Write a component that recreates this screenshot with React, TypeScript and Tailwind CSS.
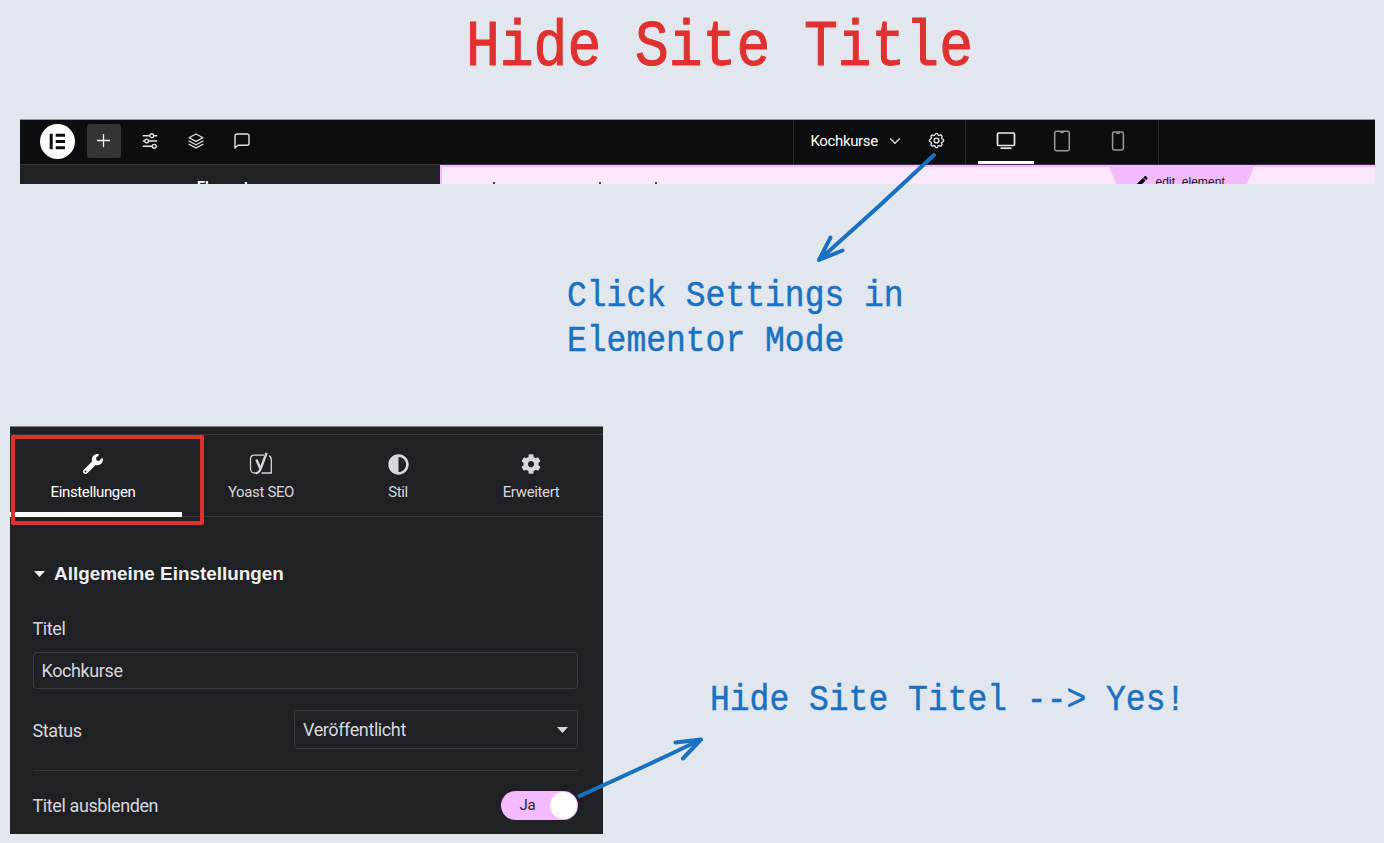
import React from "react";
import { FaAdjust, FaCog, FaWrench, FaPen } from "react-icons/fa";

const roboto = "font-['Roboto',sans-serif]";

function Note({ className, children }: { className: string; children: React.ReactNode }) {
  return (
    <div
      className={`origin-left scale-x-[0.88] whitespace-pre font-['Liberation_Mono',monospace] ${className}`}
    >
      {children}
    </div>
  );
}

function SlidersIcon() {
  return (
    <svg width="16" height="16" viewBox="0 0 16 16" fill="none" stroke="#e4e5e6" strokeWidth="1.4">
      <path d="M.8 2.7h6.900M11.700 2.700H15.200M.8 8h1.800M6.600 8H15.200M.8 13.300h9.400M14.200 13.300h1" />
      <circle cx="9.7" cy="2.7" r="1.9" />
      <circle cx="4.6" cy="8" r="1.9" />
      <circle cx="12.2" cy="13.3" r="1.9" />
    </svg>
  );
}

function LayersIcon() {
  return (
    <svg width="16" height="16" viewBox="0 0 16 16" fill="none" stroke="#e4e5e6" strokeWidth="1.3" strokeLinejoin="round" strokeLinecap="round">
      <path d="M8 1 15 4.700 8 8.400 1 4.700zM1 8l7 3.700L15 8M1 11.200l7 3.700 7-3.700" />
    </svg>
  );
}

function ChatIcon() {
  return (
    <svg width="16" height="16" viewBox="0 0 16 16" fill="none" stroke="#e4e5e6" strokeWidth="1.4" strokeLinejoin="round">
      <path d="M1 15V3a2 2 0 0 1 2-2h10a2 2 0 0 1 2 2v7.300a2 2 0 0 1-2 2H4z" />
    </svg>
  );
}

function GearOutlineIcon() {
  return (
    <svg width="19" height="19" viewBox="0 0 24 24" fill="none" stroke="#e4e5e6" strokeWidth="1.8" strokeLinejoin="round">
      <path d="M10.3 4.3c.4-1.7 3-1.7 3.4 0a1.7 1.7 0 0 0 2.6 1.1c1.5-1 3.3.8 2.4 2.3a1.7 1.7 0 0 0 1 2.6c1.8.4 1.8 3 0 3.4a1.7 1.7 0 0 0-1 2.6c.9 1.5-.9 3.3-2.4 2.4a1.7 1.7 0 0 0-2.6 1c-.4 1.8-3 1.8-3.4 0a1.7 1.7 0 0 0-2.6-1c-1.5.9-3.3-.9-2.4-2.4a1.7 1.7 0 0 0-1-2.6c-1.8-.4-1.8-3 0-3.4a1.7 1.7 0 0 0 1-2.6c-.9-1.5.9-3.3 2.4-2.3 1 .6 2.3 0 2.6-1.1z" />
      <circle cx="12" cy="12" r="3" />
    </svg>
  );
}

function YoastIcon() {
  return (
    <svg width="24" height="24" viewBox="0 0 24 24" fill="none" stroke="#d5d8dc">
      <path strokeWidth="1.3" d="M15 3.200H5.500A4 4 0 0 0 1.500 7v10a4 4 0 0 0 4 4H7M12.500 21h9.800V8c0-2-.8-3.600-2.300-4.300" />
      <path strokeWidth="2.4" d="M7.300 7.500 11.600 17M17.600.8 11.900 16c-1.100 3.500-2.300 5-5 5.200" />
    </svg>
  );
}

function Tab({ width, label, color, children }: { width: string; label: string; color: string; children: React.ReactNode }) {
  return (
    <div className={`flex shrink-0 flex-col items-center pt-[17px] ${width} ${color}`}>
      <div className="flex h-6 items-center justify-center">{children}</div>
      <span className="mt-[6px] text-[15px] leading-5 tracking-[-0.36px]">{label}</span>
    </div>
  );
}

function Toolbar() {
  return (
    <div className="ml-5 h-[65px] w-[1355px] shrink-0 overflow-hidden">
      <div className="flex h-[46px] border-t border-b border-t-[#8d9397] border-b-[#3c303f] bg-[#0c0d0e]">
        <div className="flex w-[773px] items-center pb-0.5 pl-5">
          <svg width="35" height="35" viewBox="0 0 35 35">
            <circle cx="17.5" cy="17.5" r="17.5" fill="#fff" />
            <path fill="#0c0d0e" d="M9.700 9.700h3v15.600h-3zM15.700 9.700H25v3h-9.300zM15.700 16H25v3h-9.300zM15.700 22.300H25v3h-9.300z" />
          </svg>
          <div className="ml-3 flex h-[34px] w-[34px] items-center justify-center rounded-[3px] bg-[#333436]">
            <svg width="14" height="14" viewBox="0 0 14 14" stroke="#f0f0f1" strokeWidth="1.3">
              <path d="M6.500 0v13M0 6.500h13" />
            </svg>
          </div>
          <div className="ml-[21px] flex gap-[30px]">
            <SlidersIcon />
            <LayersIcon />
            <ChatIcon />
          </div>
        </div>
        <div className={`flex w-[172px] items-center border-l border-[#2b2c2e] pb-0.5 pl-[16.5px] text-white ${roboto}`}>
          <span className="w-[67px] whitespace-nowrap pt-px text-[15px] tracking-[-0.36px]">Kochkurse</span>
          <svg className="ml-[11px]" width="12" height="8" viewBox="0 0 12 8" fill="none" stroke="#d8d9da" strokeWidth="1.4">
            <path d="M1.200 1.500 6 6.300l4.800-4.800" />
          </svg>
          <div className="-mt-px ml-[26px]"><GearOutlineIcon /></div>
        </div>
        <div className="flex w-[194px] border-x border-[#2b2c2e] pl-3">
          <div className="flex w-14 items-center justify-center border-b-[3px] border-white">
            <svg width="20" height="20" viewBox="0 0 20 20" fill="none" stroke="#eceded" strokeWidth="1.7">
              <rect x="1.5" y="2" width="17" height="12.5" rx="1.2" />
              <path d="M4.500 17.200h11" />
            </svg>
          </div>
          <div className="flex w-14 items-center justify-center pb-[3px]">
            <svg width="18" height="22" viewBox="0 0 18 22" fill="none" stroke="#9a9b9d" strokeWidth="1.5">
              <rect x="1.7" y="1.2" width="14.6" height="19.6" rx="1.7" />
              <path d="M7.200 2.400h3.600" />
            </svg>
          </div>
          <div className="flex w-14 items-center justify-center pb-[3px]">
            <svg width="14" height="20" viewBox="0 0 14 20" fill="none" stroke="#9a9b9d" strokeWidth="1.5">
              <rect x="1.6" y="1.1" width="10.8" height="17.8" rx="1.7" />
              <path d="M5.300 2.300h3.400" />
            </svg>
          </div>
        </div>
      </div>
      <div className="flex h-[19px]">
        <div className={`h-full w-[420px] overflow-hidden bg-[#1f2124] pl-[177px] pt-[12px] text-[14px] font-bold leading-5 text-white ${roboto}`}>
          Elemente
        </div>
        <div className="flex h-full w-[935px] items-start overflow-hidden border-l-2 border-t-2 border-[#f3bafd] bg-[#fae8ff]">
          <div className="flex w-[667px] pl-[51px] pt-[15px]">
            <i className="h-0.5 w-0.5 bg-[#4a424c]" />
            <i className="ml-[104px] h-0.5 w-0.5 bg-[#4a424c]" />
            <i className="ml-[54px] h-0.5 w-0.5 bg-[#4a424c]" />
          </div>
          <div className="flex h-[30px] w-[145px] bg-[#f3bafd] pl-[28px] pt-[8px] text-[#1c141e] [clip-path:polygon(0_0,100%_0,91%_100%,9%_100%)]">
            <FaPen size={10.5} className="mt-px text-black" />
            <span className="ml-[8px] whitespace-nowrap font-['Liberation_Sans',sans-serif] text-[12.1px] leading-[14px]">edit&nbsp; element</span>
          </div>
        </div>
      </div>
    </div>
  );
}

function SettingsPanel() {
  return (
    <div className={`ml-2.5 h-[408px] w-[593px] shrink-0 overflow-hidden border-t border-[#7c8286] bg-[#1f2124] text-[#d5d8dc] ${roboto}`}>
      <div className="mt-[7px] flex h-[83px] border-y border-[#35383d]">
        <div className="h-[82px] w-[172px] shrink-0 border-b-[5px] border-white">
          <Tab width="w-[166px]" label="Einstellungen" color="text-white">
            <FaWrench size={20} />
          </Tab>
        </div>
        <Tab width="w-[158px]" label="Yoast SEO" color="">
          <YoastIcon />
        </Tab>
        <Tab width="w-[116px]" label="Stil" color="">
          <FaAdjust size={21} />
        </Tab>
        <Tab width="w-[150px]" label="Erweitert" color="">
          <FaCog size={20} />
        </Tab>
      </div>
      <div className="pl-[22.5px] pr-[25px]">
        <div className="mt-[45px] flex h-6 items-center font-['Liberation_Sans',sans-serif] text-[18.9px] font-bold text-[#eef0f2]">
          <svg className="ml-[1.5px] mr-[9px]" width="11" height="6" viewBox="0 0 11 6"><path fill="currentColor" d="M0 0h11L5.500 6z" /></svg>
          Allgemeine Einstellungen
        </div>
        <div className="mt-[31px] h-6 text-[18px] leading-6 tracking-[-0.4px]">Titel</div>
        <div className="mt-[11px] flex h-[37px] items-center rounded border border-[#3b3e44] pl-2 text-[18px] tracking-[-0.4px]">Kochkurse</div>
        <div className="mt-[21px] flex h-[39px] items-center justify-between text-[18px] tracking-[-0.4px]">
          <span className="pt-px">Status</span>
          <div className="flex h-full w-[284px] items-center justify-between rounded border border-[#3b3e44] pl-2 pr-[9px]">
            <span>Veröffentlicht</span>
            <svg width="11" height="6" viewBox="0 0 11 6"><path fill="currentColor" d="M0 0h11L5.500 6z" /></svg>
          </div>
        </div>
        <div className="mt-[21px] h-px bg-[#35383d]" />
        <div className="mt-5 flex h-[29px] items-center justify-between text-[18px] tracking-[-0.4px]">
          <span>Titel ausblenden</span>
          <div className="flex h-[29px] w-[77px] items-center justify-between rounded-full bg-[#f3bafd] pl-[18.5px] pr-px text-[15px] text-[#2b222d]">
            <span className="-mt-px">Ja</span>
            <span className="h-[27px] w-[27px] rounded-full bg-white" />
          </div>
        </div>
      </div>
    </div>
  );
}

export default function App() {
  return (
    <div className="relative flex h-[843px] w-[1384px] flex-col overflow-hidden bg-[#e2e7ee]">
      <h1 className="h-[119px] shrink-0 pl-[466px] pt-[12px]">
        <Note className="text-[64px] leading-[72px] text-[#e03131] [-webkit-text-stroke:1.1px_#e03131]">Hide Site Title</Note>
      </h1>
      <Toolbar />
      <div className="h-[242px] shrink-0 pl-[567px] pt-[90px]">
        <Note className="text-[37.5px] leading-[45px] text-[#1971c2] [-webkit-text-stroke:0.5px_#1971c2]">{"Click Settings in\nElementor Mode"}</Note>
      </div>
      <div className="flex">
        <SettingsPanel />
        <div className="pl-[107px] pt-[252px]">
          <Note className="text-[37.5px] leading-[45px] text-[#1971c2] [-webkit-text-stroke:0.5px_#1971c2]">{"Hide Site Titel --> Yes!"}</Note>
        </div>
      </div>
      <div className="absolute left-[11px] top-[435px] h-[90px] w-[193px] rounded-[2px] border-4 border-[#e03131]" />
      <svg className="pointer-events-none absolute inset-0" width="1384" height="843" viewBox="0 0 1384 843" fill="none" stroke="#1971c2" strokeWidth="4" strokeLinecap="round" strokeLinejoin="round">
        <path d="M934 155Q878 208 819 260M830.500 237.500 819 260l23.500-9.500" />
        <path d="M579.500 796Q642 768 701 739.500M675.500 742.500l25.500-3-18 19" />
      </svg>
    </div>
  );
}
